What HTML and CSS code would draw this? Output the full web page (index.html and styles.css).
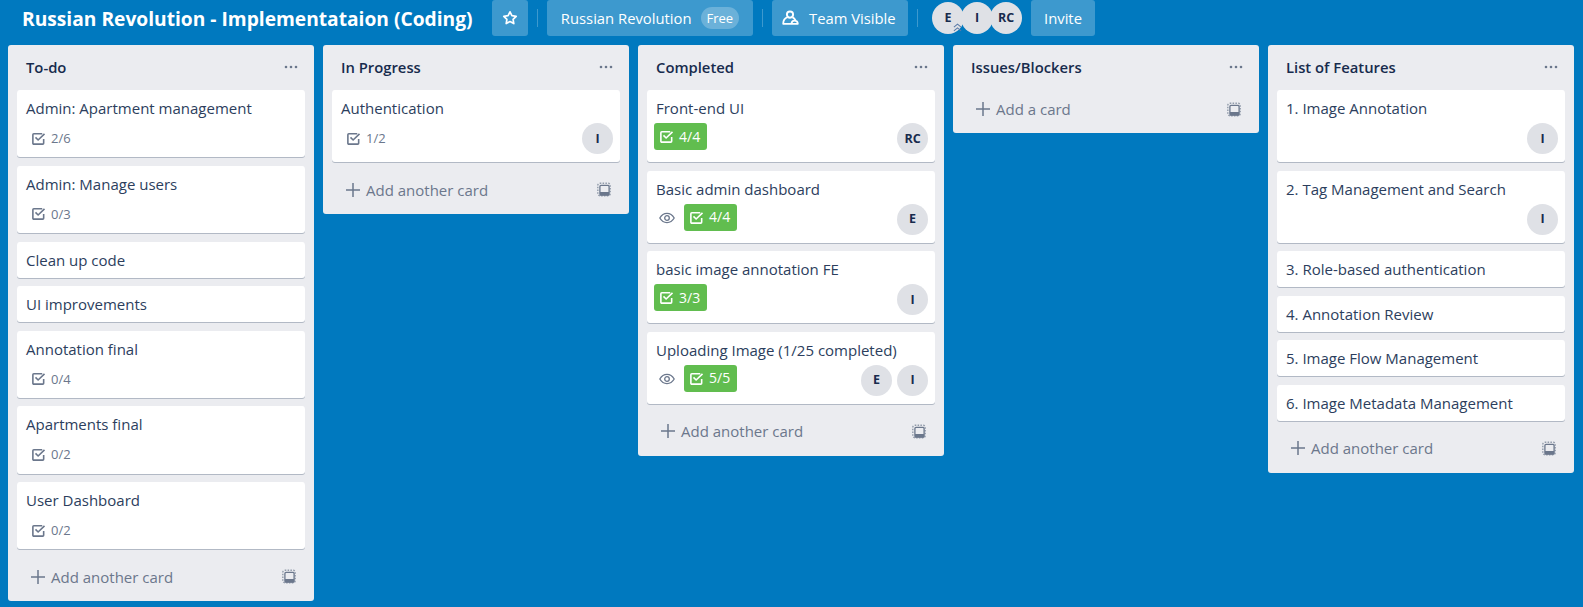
FILE: index.html
```html
<!DOCTYPE html>
<html lang="en">
<head>
<meta charset="utf-8">
<title>Russian Revolution - Implementataion (Coding)</title>
<link rel="stylesheet" href="styles.css">
</head>
<body>
<svg class="defs" width="0" height="0">
  <symbol id="i-check" viewBox="0 0 16 16"><path d="M13.500 8.500V13a1 1 0 0 1-1 1H3a1 1 0 0 1-1-1V4a1 1 0 0 1 1-1h9" fill="none" stroke="currentColor" stroke-width="1.700"/><path d="M4.800 6.800l2.800 2.800L14.400 3" fill="none" stroke="currentColor" stroke-width="1.700"/></symbol>
  <symbol id="i-eye" viewBox="0 0 16 16"><path d="M.8 8C2.600 4.900 5 3.400 8 3.400s5.400 1.500 7.200 4.600C13.400 11.100 11 12.600 8 12.600S2.600 11.100.8 8z" fill="none" stroke="currentColor" stroke-width="1.300"/><circle cx="8" cy="8" r="2.300" fill="none" stroke="currentColor" stroke-width="1.300"/></symbol>
  <symbol id="i-plus" viewBox="0 0 14 14"><path d="M7 0v14M0 7h14" stroke="currentColor" stroke-width="1.500"/></symbol>
  <symbol id="i-tpl" viewBox="0 0 14 15"><rect x=".8" y="1.300" width="12.400" height="12.400" rx="2" fill="none" stroke="currentColor" stroke-width="1.400" stroke-dasharray="1.500 1.300" opacity=".7"/><rect x="2.900" y="3.400" width="9.200" height="9.800" rx="1.200" fill="#ebecf0" stroke="currentColor" stroke-width="1.300"/><rect x="3" y="10" width="9" height="3.400" fill="currentColor"/></symbol>
  <symbol id="i-dots" viewBox="0 0 14 4"><circle cx="2" cy="2" r="1.300" fill="currentColor"/><circle cx="7" cy="2" r="1.300" fill="currentColor"/><circle cx="12" cy="2" r="1.300" fill="currentColor"/></symbol>
</svg>

<div class="topbar">
  <div class="board-name">Russian Revolution - Implementataion (Coding)</div>
  <a class="btn btn-star"><svg width="16" height="16" viewBox="0 0 16 16"><path d="M8 1.800l1.900 3.900 4.300.6-3.100 3 .7 4.300L8 11.600l-3.800 2 .7-4.300-3.100-3 4.300-.6z" fill="none" stroke="#fff" stroke-width="1.700" stroke-linejoin="round"/></svg></a>
  <span class="sep"></span>
  <a class="btn btn-org">Russian Revolution <span class="pill">Free</span></a>
  <span class="sep"></span>
  <a class="btn btn-team"><svg width="17" height="16" viewBox="0 0 17 16"><circle cx="8" cy="4.600" r="3.100" fill="none" stroke="#fff" stroke-width="1.900"/><path d="M5.600 7.200C2.800 8.200 1.200 10.600 1.200 13.800h8.300c.1-2 1.200-3.100 3-3.100 1.900 0 3.200 1.200 3.300 3.100h-6.300M10.500 7.400c1.300.5 2.300 1.500 3 3" fill="none" stroke="#fff" stroke-width="1.800" stroke-linejoin="round"/></svg>Team Visible</a>
  <span class="sep"></span>
  <div class="members">
    <span class="avatar avatar-top">E<svg class="crown" width="9" height="9" viewBox="0 0 10 10"><path d="M1 4.500l4-3.300 4 3.300M1 8.800l4-3.300 4 3.300" fill="none" stroke="#5a7ba8" stroke-width="1.200"/></svg></span>
    <span class="avatar avatar-top">I</span>
    <span class="avatar avatar-top">RC</span>
  </div>
  <a class="btn btn-invite">Invite</a>
</div>

<div class="board">
  <div class="list">
    <div class="list-head"><h2>To-do</h2><svg class="dots"><use href="#i-dots"/></svg></div>
    <div class="cards">
      <div class="card card-badges"><div class="title">Admin: Apartment management</div><div class="badges"><span class="count"><svg><use href="#i-check"/></svg>2/6</span></div></div>
      <div class="card card-badges"><div class="title">Admin: Manage users</div><div class="badges"><span class="count"><svg><use href="#i-check"/></svg>0/3</span></div></div>
      <div class="card"><div class="title">Clean up code</div></div>
      <div class="card"><div class="title">UI improvements</div></div>
      <div class="card card-badges"><div class="title">Annotation final</div><div class="badges"><span class="count"><svg><use href="#i-check"/></svg>0/4</span></div></div>
      <div class="card card-badges"><div class="title">Apartments final</div><div class="badges"><span class="count"><svg><use href="#i-check"/></svg>0/2</span></div></div>
      <div class="card card-badges"><div class="title">User Dashboard</div><div class="badges"><span class="count"><svg><use href="#i-check"/></svg>0/2</span></div></div>
    </div>
    <div class="add"><svg class="plus"><use href="#i-plus"/></svg>Add another card<svg class="tpl"><use href="#i-tpl"/></svg></div>
  </div>

  <div class="list">
    <div class="list-head"><h2>In Progress</h2><svg class="dots"><use href="#i-dots"/></svg></div>
    <div class="cards">
      <div class="card card-member"><div class="title">Authentication</div><div class="row"><span class="count"><svg><use href="#i-check"/></svg>1/2</span><span class="people"><span class="avatar">I</span></span></div></div>
    </div>
    <div class="add"><svg class="plus"><use href="#i-plus"/></svg>Add another card<svg class="tpl"><use href="#i-tpl"/></svg></div>
  </div>

  <div class="list">
    <div class="list-head"><h2>Completed</h2><svg class="dots"><use href="#i-dots"/></svg></div>
    <div class="cards">
      <div class="card card-member"><div class="title">Front-end UI</div><div class="row"><span class="done"><svg><use href="#i-check"/></svg>4/4</span><span class="people"><span class="avatar">RC</span></span></div></div>
      <div class="card card-member"><div class="title">Basic admin dashboard</div><div class="row"><svg class="eye"><use href="#i-eye"/></svg><span class="done"><svg><use href="#i-check"/></svg>4/4</span><span class="people"><span class="avatar">E</span></span></div></div>
      <div class="card card-member"><div class="title">basic image annotation FE</div><div class="row"><span class="done"><svg><use href="#i-check"/></svg>3/3</span><span class="people"><span class="avatar">I</span></span></div></div>
      <div class="card card-member"><div class="title">Uploading Image (1/25 completed)</div><div class="row"><svg class="eye"><use href="#i-eye"/></svg><span class="done"><svg><use href="#i-check"/></svg>5/5</span><span class="people"><span class="avatar">E</span><span class="avatar">I</span></span></div></div>
    </div>
    <div class="add"><svg class="plus"><use href="#i-plus"/></svg>Add another card<svg class="tpl"><use href="#i-tpl"/></svg></div>
  </div>

  <div class="list">
    <div class="list-head"><h2>Issues/Blockers</h2><svg class="dots"><use href="#i-dots"/></svg></div>
    <div class="add add-first"><svg class="plus"><use href="#i-plus"/></svg>Add a card<svg class="tpl"><use href="#i-tpl"/></svg></div>
  </div>

  <div class="list">
    <div class="list-head"><h2>List of Features</h2><svg class="dots"><use href="#i-dots"/></svg></div>
    <div class="cards">
      <div class="card card-member"><div class="title">1. Image Annotation</div><div class="row"><span class="people"><span class="avatar">I</span></span></div></div>
      <div class="card card-member"><div class="title">2. Tag Management and Search</div><div class="row"><span class="people"><span class="avatar">I</span></span></div></div>
      <div class="card"><div class="title">3. Role-based authentication</div></div>
      <div class="card"><div class="title">4. Annotation Review</div></div>
      <div class="card"><div class="title">5. Image Flow Management</div></div>
      <div class="card"><div class="title">6. Image Metadata Management</div></div>
    </div>
    <div class="add"><svg class="plus"><use href="#i-plus"/></svg>Add another card<svg class="tpl"><use href="#i-tpl"/></svg></div>
  </div>
</div>
</body>
</html>
```

FILE: styles.css
```css
* { margin:0; padding:0; box-sizing:border-box; }
html, body { height:100%; }
body { background:#0079bf; color:#172b4d; font:15px/20px "Open Sans", "Noto Sans", Arial, sans-serif; overflow:hidden; }
.defs { position:absolute; }

.topbar { display:flex; align-items:flex-start; height:36px; margin-bottom:9px; padding-left:22px; color:#fff; }
.board-name { width:470px; font-size:19.200px; font-weight:700; line-height:38px; white-space:nowrap; }
.btn { display:flex; align-items:center; justify-content:center; height:36px; background:rgba(255,255,255,.24); border-radius:3px; font-size:14.800px; white-space:nowrap; }
.btn-star { width:36px; }
.btn-org { width:206px; gap:9px; }
.btn-team { width:136px; gap:10px; justify-content:flex-start; padding-left:10px; }
.btn-invite { width:64px; margin-left:9px; }
.pill { height:22px; padding:0 6px; background:rgba(255,255,255,.24); border-radius:11px; font-size:13px; line-height:22px; }
.sep { width:1px; height:18px; margin:9px 9px 0; background:rgba(255,255,255,.24); }
.members { display:flex; margin:2px 0 0 5px; }

.avatar { display:flex; align-items:center; justify-content:center; width:31px; height:31px; background:#dfe1e6; border-radius:50%; color:#172b4d; font-size:12.500px; font-weight:700; }
.avatar-top { position:relative; width:32px; height:32px; margin-right:-3px; }
.avatar-top:last-child { margin-right:0; }
.crown { position:absolute; left:21px; bottom:2px; }

.board { display:flex; align-items:flex-start; gap:9px; padding-left:8px; }
.list { width:306px; background:#ebecf0; border-radius:3px; }
.list-head { display:flex; align-items:center; justify-content:space-between; height:45px; padding:0 16px 2px 18px; }
.list-head h2 { font-size:14.800px; font-weight:600; }
.dots { width:14px; height:4px; color:#6b778c; }

.cards { display:flex; flex-direction:column; gap:8.500px; padding:0 9px; }
.card { min-height:36px; padding:8px 9px 0; background:#fff; border-radius:3px; box-shadow:0 1px 0 rgba(9,30,66,.25); color:#2c3e5d; }
.card-badges { height:67.300px; }
.card-member { height:72px; }
.title { line-height:20px; }

.badges { display:flex; margin-top:10px; }
.row { display:flex; align-items:flex-start; margin-top:5px; margin-left:-2px; height:32px; }
.count { display:flex; align-items:center; height:20px; margin:5px 0 0 7px; color:#6b778c; font-size:13px; }
.badges .count { margin:0 0 0 5px; }
.count svg { width:15px; height:15px; margin-right:5px; }
.done { display:flex; align-items:center; width:53px; height:27px; padding-left:5px; background:#61bd4f; border-radius:3px; color:#fff; font-size:14px; }
.done svg { width:15px; height:15px; margin-right:5px; }
.eye { width:16px; height:16px; margin:6px 9px 0 5px; color:#6b778c; }
.people { display:flex; gap:5px; margin-left:auto; margin-right:-2px; }

.add { display:flex; align-items:center; height:52px; padding:3px 18px 0 23px; color:#6b778c; }
.add-first { height:43px; padding:0 18px 5px 23px; }
.plus { width:14px; height:14px; margin-right:6px; }
.tpl { width:14px; height:15px; margin-left:auto; }
```
